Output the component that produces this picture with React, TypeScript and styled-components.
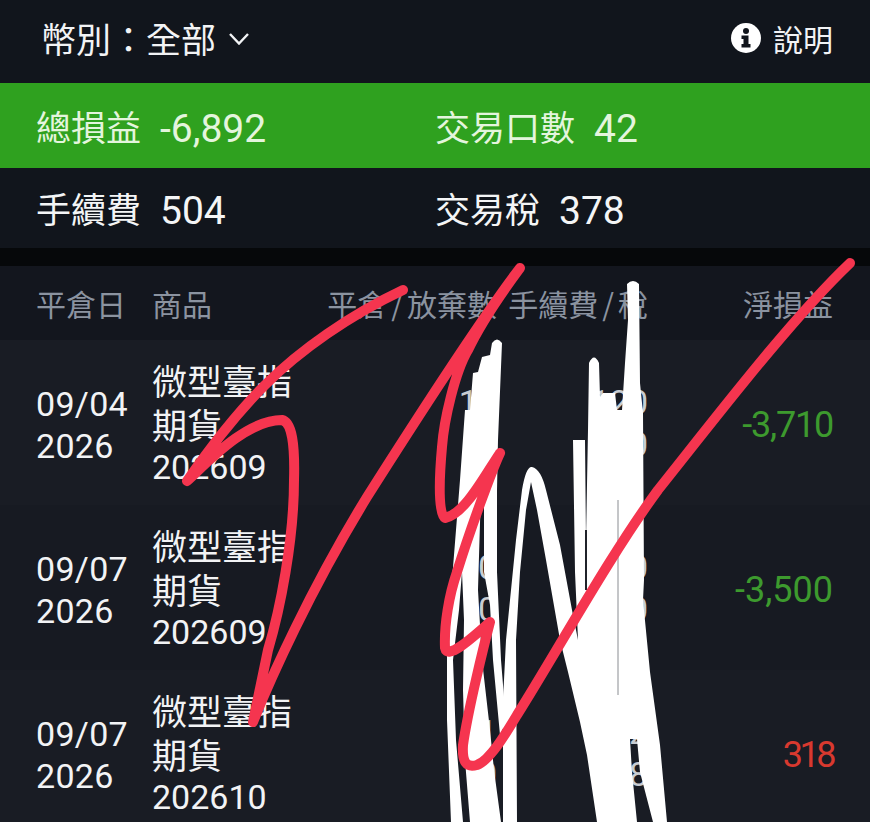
import React from "react";
import styled, { createGlobalStyle } from "styled-components";

const GlobalStyle = createGlobalStyle`
  html, body {
    margin: 0;
    padding: 0;
    background: #181b23;
  }
`;

const cjk = `"Noto Sans CJK TC", "Noto Sans", sans-serif`;
const digits = `Roboto, "Noto Sans CJK TC", sans-serif`;

const rows = [
  { date: "09/04", code: "202609", qty: ["10", "0"], fee: ["120", "90"], net: "-3,710", track: -1.2, up: false, tint: "#191c24" },
  { date: "09/07", code: "202609", qty: ["10", "0"], fee: ["120", "90"], net: "-3,500", track: 0, up: false, tint: "#171a22" },
  { date: "09/07", code: "202610", qty: ["1", "0"], fee: ["12", "8"], net: "318", track: -3.5, up: true, tint: "#191c24" },
];

const App: React.FC = () => {
  return (
    <Page>
      <GlobalStyle />
      <TopBar>
        <Currency>
          幣別：全部
          <Chevron viewBox="0 0 20 12">
            <path d="M1 1 L10 10.5 L19 1" />
          </Chevron>
        </Currency>
        <Help>
          <InfoIcon viewBox="0 0 30 30">
            <circle cx="15" cy="15" r="15" fill="#fff" />
            <circle cx="15" cy="8" r="3" fill="#11151c" />
            <path d="M10.5 12.5 H17.5 V21 H19.5 V24.5 H10.5 V21 H12.5 V16 H10.5 Z" fill="#11151c" />
          </InfoIcon>
          說明
        </Help>
      </TopBar>

      <SummaryRow $green>
        <SummaryCell>
          <SummaryLabel>總損益</SummaryLabel>
          <SummaryValue>-6,892</SummaryValue>
        </SummaryCell>
        <SummaryCell>
          <SummaryLabel>交易口數</SummaryLabel>
          <SummaryValue>42</SummaryValue>
        </SummaryCell>
      </SummaryRow>
      <SummaryRow>
        <SummaryCell>
          <SummaryLabel>手續費</SummaryLabel>
          <SummaryValue>504</SummaryValue>
        </SummaryCell>
        <SummaryCell>
          <SummaryLabel>交易稅</SummaryLabel>
          <SummaryValue>378</SummaryValue>
        </SummaryCell>
      </SummaryRow>

      <Divider />

      <HeadRow>
        <span>平倉日</span>
        <span>商品</span>
        <HeadRight>
          平倉<Slash>/</Slash>放棄數
        </HeadRight>
        <HeadRight>
          手續費<Slash>/</Slash>稅
        </HeadRight>
        <HeadRight>淨損益</HeadRight>
      </HeadRow>

      {rows.map((r, i) => (
        <TradeRow key={i} $tint={r.tint}>
          <DateCell>
            <div>{r.date}</div>
            <div>2026</div>
          </DateCell>
          <ProductCell>
            <ProductName>微型臺指</ProductName>
            <ProductName>期貨</ProductName>
            <ProductCode>{r.code}</ProductCode>
          </ProductCell>
          <NumberCell>
            <div>{r.qty[0]}</div>
            <div>{r.qty[1]}</div>
          </NumberCell>
          <NumberCell>
            <div>{r.fee[0]}</div>
            <div>{r.fee[1]}</div>
          </NumberCell>
          <NetCell $up={r.up} $track={r.track}>
            {r.net}
          </NetCell>
        </TradeRow>
      ))}

      {/* 手寫塗改 */}
      <Scribble viewBox="0 0 870 822">
        <g fill="#fff">
          <path d="M492 343 Q497 336 502 343 L498 440 L497 490 L497 572 L501 660 L506 722 L500 735 L493 660 L490 605 L484 572 L484 500 L481 490 L478 590 L482 660 L490 730 L494 770 L501 822 L470 822 L465 760 L463 690 L464 620 L462 572 L459 610 L453 660 L456 740 L463 822 L451 822 L447 720 L447 650 L452 580 L460 480 L465 410 L470 410 L473 373 L478 372 L482 357 L490 355 Z" />
          <path d="M503 822 L503 700 L506 640 L510 600 L516 540 L522 490 Q526 466 532 467 Q541 469 546 490 L560 545 L572 610 L578 640 L575 572 L573 440 L585 440 L586 540 L588 430 L589 363 Q594 352 599 363 L600 397 L603 393 L615 393 L617 410 L622 410 L625 363 L628 320 L627 284 Q633 278 639 284 L640 383 L643 413 L644 580 L643 600 L650 672 L660 745 L667 822 L653 822 L640 772 L637 739 L630 739 L632 772 L637 822 L597 822 L587 755 L580 722 L568 672 L560 640 L553 600 L546 560 L537 510 L531 482 L526 510 L520 572 L516 640 L517 822 Z" />
        </g>
        <path d="M618 500 V695" stroke="#8a8d92" strokeWidth="1" fill="none" />
        <path d="M586 530 V590" stroke="#20232a" strokeWidth="2" fill="none" />
        <path d="M403 290 C350 315 300 350 265 385 C235 415 205 455 187 481 C205 465 245 420 282 420 C292 422 295 445 294 480 C294 540 280 610 268 650 L253 722 C270 680 310 590 367 497 C400 445 480 320 520 268 C500 295 480 325 468 350 C455 372 444 420 442 447 C439 480 438 515 445 518 C465 514 485 475 500 453 C492 470 470 530 457 572 C449 595 444 625 445 648 C447 660 470 640 490 622 C484 645 468 710 463 745 C462 762 466 768 477 765 C490 760 505 735 517 715 C555 655 610 555 658 490 C710 425 790 320 850 263" fill="none" stroke="#f5354f" strokeWidth="10" strokeLinecap="round" strokeLinejoin="round" />
      </Scribble>
    </Page>
  );
};

const Page = styled.div`
  position: relative;
  width: 870px;
  height: 822px;
  overflow: hidden;
  background: #181b23;
  color: #f2f3f5;
  font-family: ${cjk};
`;

const TopBar = styled.div`
  height: 83px;
  box-sizing: border-box;
  padding: 0 37px 8px 41px;
  display: flex;
  align-items: center;
  justify-content: space-between;
  background: #11151c;
`;

const Currency = styled.div`
  display: flex;
  align-items: center;
  font-size: 35px;
  line-height: 40px;
`;

const Chevron = styled.svg`
  width: 20px;
  height: 12px;
  margin-left: 13px;
  margin-top: 2px;
  fill: none;
  stroke: #f2f3f5;
  stroke-width: 2.4;
`;

const Help = styled.div`
  display: flex;
  align-items: center;
  gap: 12px;
  font-size: 30px;
  line-height: 40px;
`;

const InfoIcon = styled.svg`
  width: 30px;
  height: 30px;
`;

const SummaryRow = styled.div<{ $green?: boolean }>`
  height: ${(p) => (p.$green ? "85px" : "80px")};
  box-sizing: border-box;
  padding-left: 36px;
  display: grid;
  grid-template-columns: 399px 1fr;
  align-items: center;
  background: ${(p) => (p.$green ? "#2fa11f" : "#11151c")};
  color: ${(p) => (p.$green ? "#e4f5dd" : "#f4f5f6")};
`;

const SummaryCell = styled.div`
  display: flex;
  align-items: center;
  gap: 19px;
`;

const SummaryLabel = styled.span`
  font-size: 35px;
  line-height: 44px;
`;

const SummaryValue = styled.span`
  margin-top: 6px;
  font-family: ${digits};
  font-size: 39px;
  line-height: 44px;
`;

const Divider = styled.div`
  height: 18px;
  background: #06080a;
`;

const HeadRow = styled.div`
  height: 74px;
  box-sizing: border-box;
  padding: 0 37px 0 36px;
  display: grid;
  grid-template-columns: 116px 150px 195px 151px 185px;
  align-items: center;
  background: #13161e;
  color: #8b93a0;
  font-size: 30px;
  white-space: nowrap;
`;

const HeadRight = styled.span`
  justify-self: end;
`;

const Slash = styled.span`
  margin: 0 4px;
`;

const TradeRow = styled.div<{ $tint: string }>`
  height: 165px;
  box-sizing: border-box;
  padding: 0 37px 0 36px;
  display: grid;
  grid-template-columns: 116px 150px 195px 151px 185px;
  align-items: center;
  background: ${(p) => p.$tint};
`;

const DateCell = styled.div`
  margin-top: 5px;
  font-family: ${digits};
  font-size: 34px;
  line-height: 42px;
  letter-spacing: 0.3px;
`;

const ProductCell = styled.div`
  white-space: nowrap;
`;

const ProductName = styled.div`
  font-size: 35px;
  line-height: 44px;
`;

const ProductCode = styled.div`
  font-family: ${digits};
  font-size: 34px;
  line-height: 42px;
`;

const NumberCell = styled.div`
  font-family: ${digits};
  font-size: 34px;
  line-height: 42px;
  text-align: right;
  color: #c8ccd2;
`;

const NetCell = styled.div<{ $up: boolean; $track: number }>`
  margin-top: 5px;
  font-family: ${digits};
  font-size: 36px;
  line-height: 42px;
  text-align: right;
  letter-spacing: ${(p) => p.$track}px;
  color: ${(p) => (p.$up ? "#d8392f" : "#3d9a2e")};
`;

const Scribble = styled.svg`
  position: absolute;
  left: 0;
  top: 0;
  width: 870px;
  height: 822px;
  pointer-events: none;
`;

export default App;
